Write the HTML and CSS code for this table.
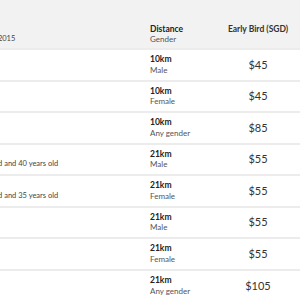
FILE: index.html
```html
<!DOCTYPE html>
<html lang="en">
<head>
    <meta charset="UTF-8">
    <title>Race categories</title>
    <link rel="stylesheet" href="styles.css">
</head>
<body>
    <div class="table-wrap">
        <table class="fees">
            <thead>
                <tr>
                    <th class="col-cat">
                        <div class="cat-title">Category</div>
                        <div class="cat-sub">Ages as at 31st Dec 2015</div>
                    </th>
                    <th class="col-dist">
                        <div class="dist">Distance</div>
                        <div class="sub">Gender</div>
                    </th>
                    <th class="col-price">Early Bird (SGD)</th>
                </tr>
            </thead>
            <tbody>
                <tr>
                    <td class="col-cat"><div class="cat-title">Open</div></td>
                    <td class="col-dist"><div class="dist">10km</div><div class="sub">Male</div></td>
                    <td class="col-price">$45</td>
                </tr>
                <tr>
                    <td class="col-cat"><div class="cat-title">Open</div></td>
                    <td class="col-dist"><div class="dist">10km</div><div class="sub">Female</div></td>
                    <td class="col-price">$45</td>
                </tr>
                <tr>
                    <td class="col-cat"><div class="cat-title">Team</div></td>
                    <td class="col-dist"><div class="dist">10km</div><div class="sub">Any gender</div></td>
                    <td class="col-price">$85</td>
                </tr>
                <tr>
                    <td class="col-cat">
                        <div class="cat-title">Open</div>
                        <div class="cat-sub">Between 18 years old and 40 years old</div>
                    </td>
                    <td class="col-dist"><div class="dist">21km</div><div class="sub">Male</div></td>
                    <td class="col-price">$55</td>
                </tr>
                <tr>
                    <td class="col-cat">
                        <div class="cat-title">Open</div>
                        <div class="cat-sub">Between 18 years old and 35 years old</div>
                    </td>
                    <td class="col-dist"><div class="dist">21km</div><div class="sub">Female</div></td>
                    <td class="col-price">$55</td>
                </tr>
                <tr>
                    <td class="col-cat"><div class="cat-title">Veteran</div></td>
                    <td class="col-dist"><div class="dist">21km</div><div class="sub">Male</div></td>
                    <td class="col-price">$55</td>
                </tr>
                <tr>
                    <td class="col-cat"><div class="cat-title">Veteran</div></td>
                    <td class="col-dist"><div class="dist">21km</div><div class="sub">Female</div></td>
                    <td class="col-price">$55</td>
                </tr>
                <tr>
                    <td class="col-cat"><div class="cat-title">Team</div></td>
                    <td class="col-dist"><div class="dist">21km</div><div class="sub">Any gender</div></td>
                    <td class="col-price">$105</td>
                </tr>
            </tbody>
        </table>
    </div>
</body>
</html>
```

FILE: styles.css
```css
body {
    margin: 0;
    padding: 0;
    background: #ffffff;
    font-family: Lato, 'Open Sans', sans-serif;
    color: #333;
    overflow: hidden;
}

.table-wrap {
    width: 300px;
    height: 300px;
    overflow: hidden;
}

.fees {
    border-collapse: collapse;
    margin-left: -78px;
    table-layout: fixed;
    width: 378px;
}

.fees thead tr {
    background: #f2f2f2;
}

.fees th {
    height: 49px;
    box-sizing: border-box;
    padding: 24px 0 0 0;
    vertical-align: top;
    text-align: left;
    font-weight: normal;
    font-size: 8.5px;
    line-height: 10px;
}

.fees tbody tr {
    border-top: 2px solid #ececec;
}

.fees td {
    height: 31.5px;
    box-sizing: border-box;
    padding: 0;
    vertical-align: middle;
    font-size: 8.5px;
    line-height: 10.5px;
}

.fees .col-cat {
    width: 228px;
    padding-left: 9px;
}

.col-dist {
    width: 66px;
}

.col-price {
    width: 84px;
}

.fees th.col-price {
    text-align: center;
    font-weight: bold;
    color: #333;
}

.fees td.col-price {
    text-align: center;
    font-size: 11px;
    color: #333;
}

.cat-title {
    font-weight: bold;
    color: #222;
}

.cat-sub {
    font-size: 7.5px;
    color: #444;
}

.sub {
    font-size: 8px;
    color: #555;
}

.dist {
    font-weight: bold;
    color: #222;
}
```
